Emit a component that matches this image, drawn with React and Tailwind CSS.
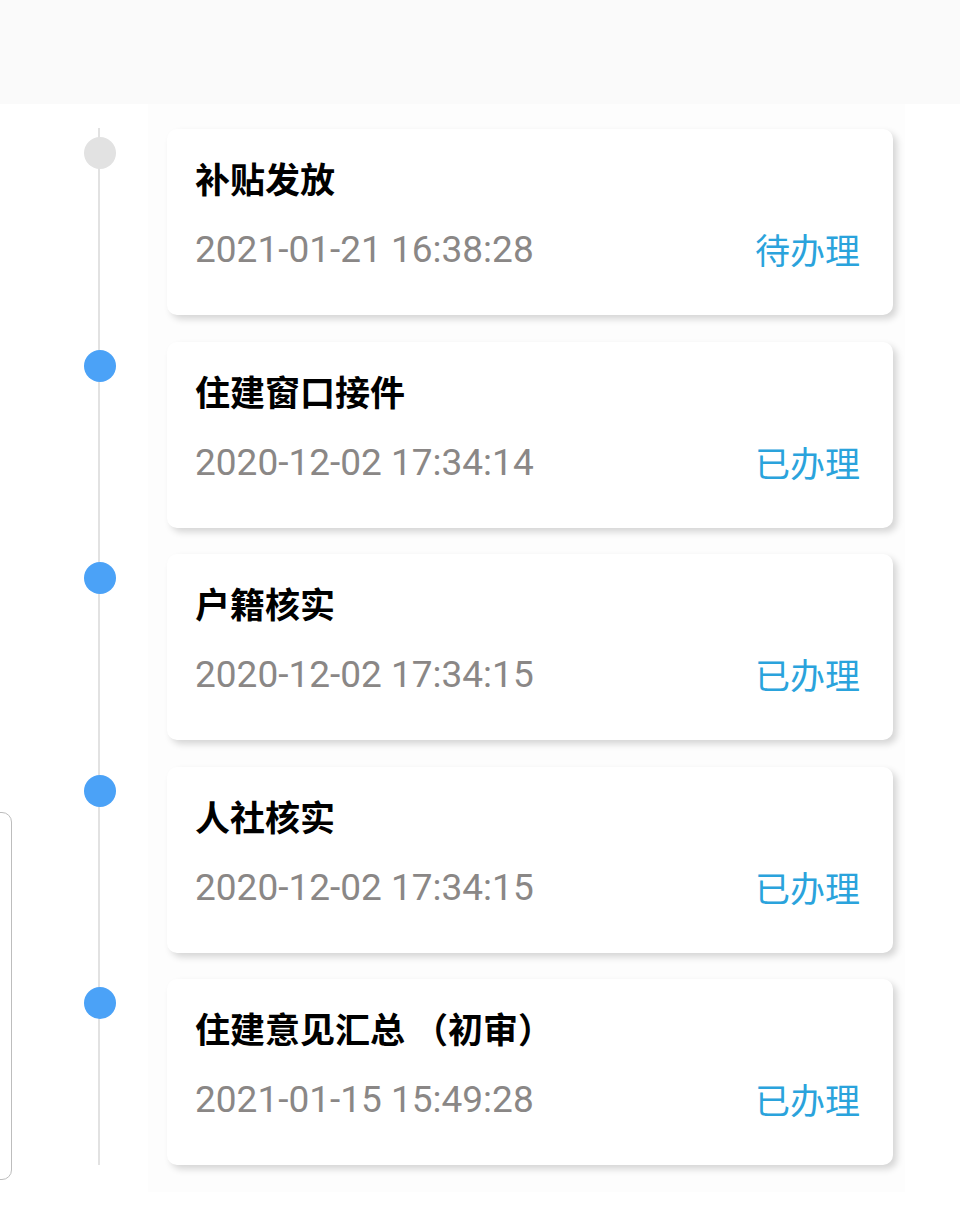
import React from "react"

const steps = [
  { name: "补贴发放", time: "2021-01-21 16:38:28", status: "待办理", done: false },
  { name: "住建窗口接件", time: "2020-12-02 17:34:14", status: "已办理", done: true },
  { name: "户籍核实", time: "2020-12-02 17:34:15", status: "已办理", done: true },
  { name: "人社核实", time: "2020-12-02 17:34:15", status: "已办理", done: true },
  { name: "住建意见汇总 （初审）", time: "2021-01-15 15:49:28", status: "已办理", done: true },
]

const cjk = { fontFamily: '"Noto Sans CJK SC", "Noto Sans", sans-serif' }
const num = { fontFamily: 'Roboto, "Noto Sans", sans-serif' }

function StepCard({ step }) {
  return (
    <div className="w-[726px] h-[186px] shrink-0 rounded-[10px] bg-white shadow-[4px_4px_7px_rgba(0,0,0,0.16)] pl-[28px] pr-[33px] pt-[29px]">
      <p style={cjk} className="text-[35px] leading-[40px] font-bold text-black">{step.name}</p>
      <div className="flex items-center justify-between mt-[31px] h-[42px]">
        <span style={num} className="text-[37px] leading-[42px] text-[#8a8786]">{step.time}</span>
        <span style={cjk} className="text-[35px] leading-[42px] text-[#2aa3dc] -mt-[2px]">{step.status}</span>
      </div>
    </div>
  )
}

export default function App() {
  return (
    <div className="w-[960px] h-[1232px] bg-white overflow-hidden relative">
      <div className="h-[104px] bg-[#fafafa]" />

      {/* drawer edge peeking in from the left */}
      <div className="absolute left-[-40px] top-[812px] w-[52px] h-[368px] rounded-[10px] border border-[#bdbdbd] bg-white" />

      <div className="flex">
        <div className="w-[148px] relative pt-[25px]">
          <div className="absolute left-[98px] top-[24px] h-[1037px] w-[2px] bg-[#e2e2e2]" />
          <div className="flex flex-col gap-[26.5px]">
            {steps.map((s, i) => (
              <div key={i} className="h-[186px] relative">
                <div className={`ml-[84px] mt-[8px] w-[32px] h-[32px] rounded-full ${s.done ? "bg-[#4ba2f7]" : "bg-[#e2e2e2]"}`} />
              </div>
            ))}
          </div>
        </div>

        <div className="w-[757px] bg-[#fdfdfd] pt-[25px] pb-[27px] pl-[19px] flex flex-col gap-[26.5px]">
          {steps.map((s, i) => <StepCard key={i} step={s} />)}
        </div>
      </div>
    </div>
  )
}
